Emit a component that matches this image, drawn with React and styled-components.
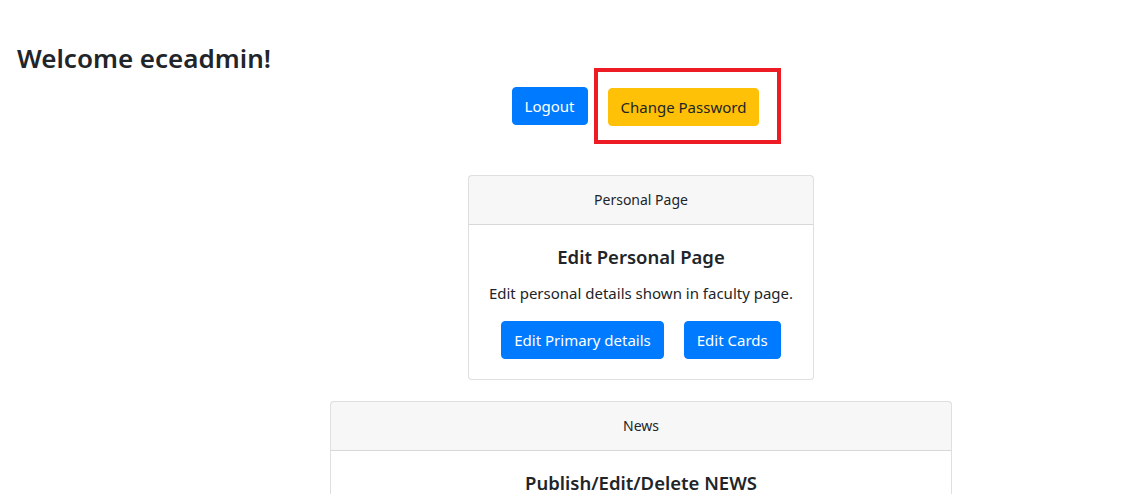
import React from "react";
import styled, { createGlobalStyle } from "styled-components";

const GlobalStyle = createGlobalStyle`
  body {
    margin: 0;
    background: #fff;
    color: #212529;
    font-family: "Noto Sans", "Open Sans", sans-serif;
    font-size: 16px;
    line-height: 1.5;
  }
  * { box-sizing: border-box; }
`;

const Page = styled.div`
  padding: 43px 0 0 17px;
`;

const Welcome = styled.h3`
  margin: 0;
  font-size: 26px;
  font-weight: 600;
  line-height: 31px;
`;

const Content = styled.div`
  padding-left: 137px;
  display: flex;
  flex-direction: column;
  align-items: center;
`;

const ButtonRow = styled.div`
  display: flex;
  align-items: center;
  gap: 6px;
  padding-left: 11px;
  margin-top: -6px;
  margin-bottom: 31px;
`;

const Highlight = styled.div`
  border: 4px solid #ed1c24;
  padding: 16px 18px 14px 10px;
`;

const Button = styled.button`
  font-family: inherit;
  font-size: 15px;
  line-height: 24px;
  padding: 6px 12px;
  border: 1px solid transparent;
  border-radius: 4px;
  cursor: pointer;
  background: ${p => (p.variant === "warning" ? "#ffc107" : "#007bff")};
  border-color: ${p => (p.variant === "warning" ? "#ffc107" : "#007bff")};
  color: ${p => (p.variant === "warning" ? "#212529" : "#fff")};
`;

const Card = styled.div`
  border: 1px solid rgba(0, 0, 0, 0.125);
  border-radius: 4px;
  background: #fff;
  text-align: center;
  margin-bottom: 21px;
  width: ${p => (p.wide ? "622px" : "auto")};
`;

const CardHeader = styled.div`
  padding: 12px 20px;
  background: rgba(0, 0, 0, 0.03);
  border-bottom: 1px solid rgba(0, 0, 0, 0.125);
  font-size: 14px;
  line-height: 24px;
`;

const CardBody = styled.div`
  padding: 20px;
`;

const CardTitle = styled.h5`
  margin: 0 0 12px;
  font-size: 18.5px;
  font-weight: 600;
  line-height: 24px;
`;

const CardText = styled.p`
  margin: 0 0 16px;
  font-size: 15px;
  line-height: 24px;
`;

const CardActions = styled.div`
  display: flex;
  justify-content: center;
  gap: 20px;
`;

export default function App() {
  return (
    <>
      <GlobalStyle />
      <Page>
        <Welcome>Welcome eceadmin!</Welcome>
        <Content>
          <ButtonRow>
            <Button>Logout</Button>
            <Highlight>
              <Button variant="warning">Change Password</Button>
            </Highlight>
          </ButtonRow>
          <Card>
            <CardHeader>Personal Page</CardHeader>
            <CardBody>
              <CardTitle>Edit Personal Page</CardTitle>
              <CardText>Edit personal details shown in faculty page.</CardText>
              <CardActions>
                <Button>Edit Primary details</Button>
                <Button>Edit Cards</Button>
              </CardActions>
            </CardBody>
          </Card>
          <Card wide>
            <CardHeader>News</CardHeader>
            <CardBody>
              <CardTitle>Publish/Edit/Delete NEWS</CardTitle>
            </CardBody>
          </Card>
        </Content>
      </Page>
    </>
  );
}
